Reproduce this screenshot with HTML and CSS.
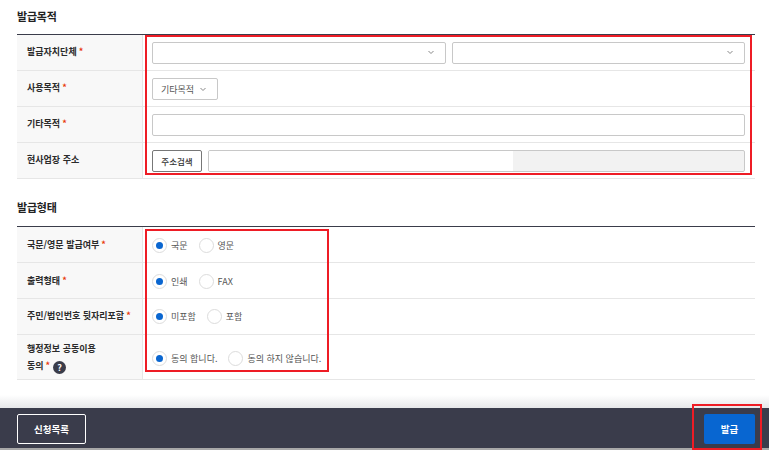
FILE: index.html
```html
<!DOCTYPE html>
<html lang="ko">
<head>
<meta charset="utf-8">
<title>발급</title>
<link rel="stylesheet" href="styles.css">
</head>
<body>
<main class="content">
  <h2 class="section-title">발급목적</h2>
  <div class="form-table">
    <div class="row">
      <div class="label">발급자치단체<span class="req">*</span></div>
      <div class="field">
        <div class="select grow"><svg class="chev" viewBox="0 0 8 5"><path d="M1.5 1l2.5 2.5L6.5 1"/></svg></div>
        <div class="select grow"><svg class="chev" viewBox="0 0 8 5"><path d="M1.5 1l2.5 2.5L6.5 1"/></svg></div>
      </div>
    </div>
    <div class="row">
      <div class="label">사용목적<span class="req">*</span></div>
      <div class="field">
        <div class="select short">기타목적<svg class="chev" viewBox="0 0 8 5"><path d="M1.5 1l2.5 2.5L6.5 1"/></svg></div>
      </div>
    </div>
    <div class="row">
      <div class="label">기타목적<span class="req">*</span></div>
      <div class="field"><div class="input grow"></div></div>
    </div>
    <div class="row">
      <div class="label">현사업장 주소</div>
      <div class="field">
        <button class="search" type="button">주소검색</button>
        <div class="input grow address"><span class="address-fill"></span><span class="address-rest"></span></div>
      </div>
    </div>
  </div>

  <h2 class="section-title second">발급형태</h2>
  <div class="form-table">
    <div class="row nudge">
      <div class="label">국문/영문 발급여부<span class="req">*</span></div>
      <div class="field radios">
        <span class="radio on"></span><span class="opt">국문</span>
        <span class="radio"></span><span class="opt">영문</span>
      </div>
    </div>
    <div class="row nudge">
      <div class="label">출력형태<span class="req">*</span></div>
      <div class="field radios">
        <span class="radio on"></span><span class="opt">인쇄</span>
        <span class="radio"></span><span class="opt">FAX</span>
      </div>
    </div>
    <div class="row">
      <div class="label">주민/법인번호 뒷자리포함<span class="req">*</span></div>
      <div class="field radios">
        <span class="radio on"></span><span class="opt">미포함</span>
        <span class="radio"></span><span class="opt">포함</span>
      </div>
    </div>
    <div class="row tall">
      <div class="label multi">
        <div>행정정보 공동이용</div>
        <div>동의<span class="req">*</span><span class="help">?</span></div>
      </div>
      <div class="field radios low">
        <span class="radio on"></span><span class="opt">동의 합니다.</span>
        <span class="radio"></span><span class="opt">동의 하지 않습니다.</span>
      </div>
    </div>
  </div>
</main>
<div class="fade"></div>
<footer class="footer">
  <button class="list-btn" type="button">신청목록</button>
  <button class="issue-btn" type="button">발급</button>
</footer>
<div class="mark mark-a"></div>
<div class="mark mark-b"></div>
<div class="mark mark-c"></div>
</body>
</html>
```
FILE: styles.css
```css
* { box-sizing: border-box; }
html, body { margin: 0; height: 450px; overflow: hidden; }
body {
  position: relative;
  background: #fff;
  color: #333;
  font-family: "Noto Sans CJK KR", "Noto Sans", sans-serif;
  font-size: 9px;
  display: flex;
  flex-direction: column;
}
.content { padding: 0 14px 0 17px; flex: 0 0 auto; height: 395px; }
.section-title {
  margin: 0;
  height: 34px;
  padding-top: 8px;
  font-size: 11px;
  line-height: 16px;
  font-weight: 700;
  letter-spacing: -0.2px;
  color: #222;
}
.section-title.second { margin-top: 12px; height: 35px; padding-top: 8px; }
.form-table { border-top: 1px solid #3a3c4a; }
.row {
  display: flex;
  height: 36px;
  border-bottom: 1px solid #e6e6e6;
}
.row.tall { height: 45px; }
.row.nudge > .label { padding-bottom: 1px; }
.row.nudge > .field { padding-top: 1px; }
.label {
  width: 126px;
  flex: none;
  background: #f8f8f8;
  border-right: 1px solid #e6e6e6;
  padding: 0 0 3px 10px;
  display: flex;
  align-items: center;
  font-weight: 700;
  font-size: 9px;
  color: #2b2b2b;
}
.label.multi { display: block; padding-top: 5px; line-height: 17px; }
.req { color: #e8380d; margin-left: 2px; font-weight: 700; }
.help {
  display: inline-block;
  width: 13px;
  height: 13px;
  margin-left: 3px;
  border-radius: 50%;
  background: #3a3c4a;
  color: #fff;
  font-size: 9px;
  line-height: 13px;
  text-align: center;
  vertical-align: -2px;
}
.field {
  flex: 1;
  display: flex;
  align-items: center;
  gap: 6px;
  padding: 0 10px 0 9px;
}
.select, .input {
  height: 22px;
  border: 1px solid #c8c8c8;
  border-radius: 2px;
  background: #fff;
}
.grow { flex: 1; }
.select { display: flex; align-items: center; justify-content: flex-end; padding-right: 10px; }
.select.short {
  width: 66px;
  padding: 1px 10px 0 8px;
  justify-content: space-between;
  color: #555;
  font-size: 9px;
}
.chev { width: 8px; height: 5px; fill: none; stroke: #888; stroke-width: 1; }
.search {
  width: 50px;
  height: 22px;
  padding: 0;
  border: 1px solid #777;
  border-radius: 2px;
  background: #fff;
  color: #333;
  font: 500 8.5px "Noto Sans CJK KR", sans-serif;
}
.address { display: flex; overflow: hidden; background: #f2f2f2; }
.address-fill { width: 304px; background: #fff; }
.address-rest { flex: 1; }
.radios { gap: 0; padding-left: 9px; }
.radios.low { padding-top: 3px; }
.radio {
  width: 15px;
  height: 15px;
  border: 1px solid #dcdcdc;
  border-radius: 50%;
  background: #fff;
  flex: none;
  margin-right: 4px;
  display: flex;
  align-items: center;
  justify-content: center;
}
.radio.on::after {
  content: "";
  width: 7px;
  height: 7px;
  border-radius: 50%;
  background: #0a66d0;
}
.opt { color: #555; font-size: 9px; margin-right: 11px; }
.fade {
  height: 13px;
  flex: none;
  background: linear-gradient(#fff, #e6e7e9);
}
.footer {
  flex: none;
  height: 40px;
  background: #3a3c4b;
  display: flex;
  justify-content: space-between;
  align-items: center;
  padding: 2px 14px 0 17px;
  margin-bottom: 2px;
  box-shadow: 0 2px 0 #a8a8a8;
}
.list-btn {
  width: 69px;
  height: 30px;
  background: transparent;
  border: 1px solid #fff;
  border-radius: 2px;
  color: #fff;
  font: 700 9.5px "Noto Sans CJK KR", sans-serif;
}
.issue-btn {
  width: 51px;
  height: 30px;
  background: #0866d1;
  border: 0;
  border-radius: 2px;
  color: #fff;
  font: 700 9.5px "Noto Sans CJK KR", sans-serif;
}
.mark { position: absolute; border: 2px solid #ee1c25; pointer-events: none; }
.mark-a { left: 145px; top: 35px; width: 607px; height: 140px; }
.mark-b { left: 145px; top: 229px; width: 184px; height: 143px; }
.mark-c { left: 692px; top: 404px; width: 70px; height: 46px; }
```
